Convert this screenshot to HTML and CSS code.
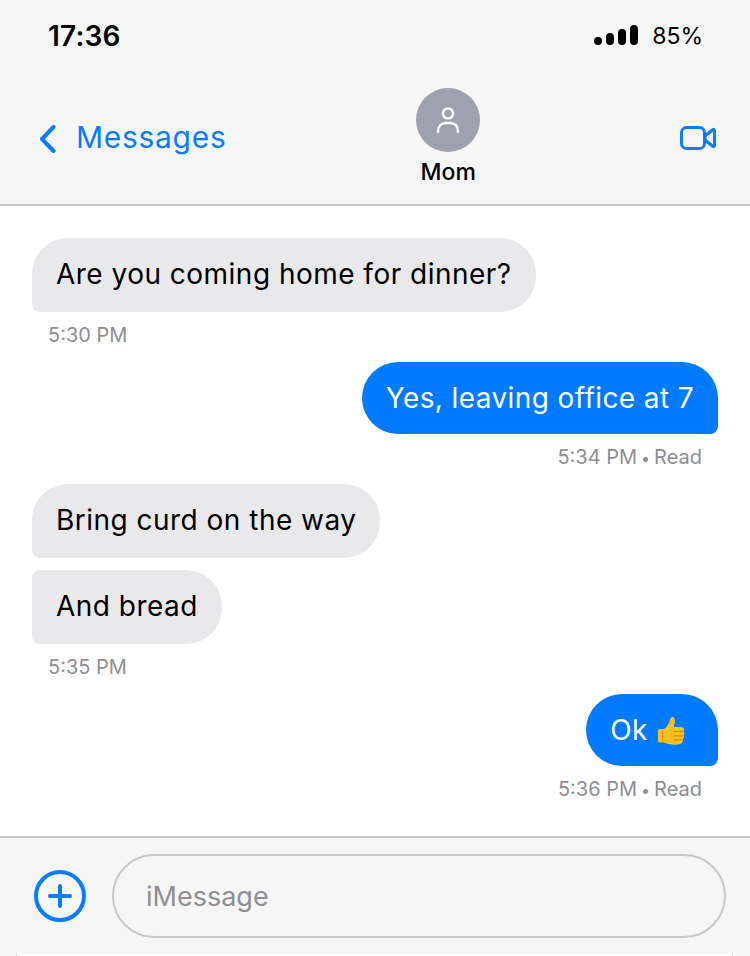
FILE: index.html
```html
<!DOCTYPE html>
<html lang="en">
<head>
    <meta charset="UTF-8">
    <meta name="viewport" content="width=device-width, initial-scale=1.0">
    <title>Messages</title>
    <link rel="stylesheet" href="styles.css">
</head>
<body>

    <div class="phone">
        <header class="top">
            <div class="status-bar">
                <span class="clock">17:36</span>
                <div class="status-right">
                    <div class="signal">
                        <span class="bar bar-1"></span>
                        <span class="bar bar-2"></span>
                        <span class="bar bar-3"></span>
                        <span class="bar bar-4"></span>
                    </div>
                    <span class="battery">85%</span>
                </div>
            </div>
            <div class="nav-bar">
                <div class="back">
                    <svg class="back-icon" width="18" height="28" viewBox="0 0 18 28"><path d="M15.5 2 L4 14 L15.5 26" fill="none" stroke="#0a7cff" stroke-width="4" stroke-linecap="round" stroke-linejoin="round"/></svg>
                    <span>Messages</span>
                </div>
                <div class="contact">
                    <div class="avatar">
                        <svg width="24" height="28" viewBox="0 0 24 28"><circle cx="12" cy="7.5" r="5" fill="none" stroke="#fff" stroke-width="2.4"/><path d="M2 26 C2 20 5 17 10 17 H14 C19 17 22 20 22 26" fill="none" stroke="#fff" stroke-width="2.4" stroke-linecap="round"/></svg>
                    </div>
                    <span class="contact-name">Mom</span>
                </div>
                <svg class="video-icon" width="36" height="24" viewBox="0 0 36 24"><rect x="1.5" y="1.5" width="23" height="21" rx="5" fill="none" stroke="#0a7cff" stroke-width="3"/><path d="M25 10 L33 3.5 C33.6 3.2 34.5 3.5 34.5 4.5 V19.5 C34.5 20.5 33.6 20.8 33 20.5 L25 14 Z" fill="none" stroke="#0a7cff" stroke-width="3" stroke-linejoin="round"/></svg>
            </div>
        </header>

        <main class="thread">
            <div class="bubble incoming first">Are you coming home for dinner?</div>
            <p class="stamp">5:30 PM</p>

            <div class="bubble outgoing">Yes, leaving office at 7</div>
            <p class="stamp stamp-right">5:34 PM<span class="dot">&bull;</span>Read</p>

            <div class="bubble incoming">Bring curd on the way</div>
            <div class="bubble incoming follow-up">And bread</div>
            <p class="stamp">5:35 PM</p>

            <div class="bubble outgoing">Ok
                <svg class="thumbs" width="28" height="30" viewBox="0 0 30 30" preserveAspectRatio="none"><path d="M1 15 C1 14 2 13 3 13 H7 C8.5 13 11.5 9.5 13 6.5 C14 4.5 14.5 1 16.5 1 C19 1 19.5 4 19 6.5 L18 11 H26 C28 11 29 12 29 13.5 C29 14.5 28.5 15 28.5 15.5 C29.5 16.5 29.5 18.5 28.5 19.5 C29 20.5 29 22.5 27.5 23.5 C28 25.5 27 27.5 25 28 C20.5 29 14 29 10 27.5 C8.5 27 7 26.5 5 26.5 H3 C2 26.5 1 26 1 25 Z" fill="#fcc21b"/><path d="M18 15.5 H28 M18 19.8 H28 M18 23.8 H27" stroke="#d98a00" stroke-width="1.3" fill="none"/><path d="M6 14 V26" stroke="#e8a012" stroke-width="1.2" fill="none"/></svg>
            </div>
            <p class="stamp stamp-right">5:36 PM<span class="dot">&bull;</span>Read</p>
        </main>

        <footer class="composer">
            <svg class="plus-icon" width="52" height="52" viewBox="0 0 52 52"><circle cx="26" cy="26" r="24" fill="none" stroke="#0a7cff" stroke-width="4"/><path d="M16 26 H36 M26 16 V36" stroke="#0a7cff" stroke-width="4" stroke-linecap="round"/></svg>
            <div class="input">iMessage</div>
        </footer>
    </div>

</body>
</html>
```

FILE: styles.css
```css
body {
    font-family: Inter, "Liberation Sans", sans-serif;
    background-color: #fff;
    margin: 0;
    padding: 0;
}
.phone {
    width: 750px;
    height: 956px;
    display: flex;
    flex-direction: column;
    overflow: hidden;
}
.top {
    background-color: #f6f6f6;
    border-bottom: 2px solid #c8c8c8;
    height: 204px;
    flex-shrink: 0;
}
.status-bar {
    display: flex;
    justify-content: space-between;
    align-items: center;
    height: 72px;
    padding: 0 48px;
}
.clock {
    font-size: 28px;
    font-weight: 600;
    letter-spacing: 0.2px;
    color: #000;
}
.status-right {
    display: flex;
    align-items: center;
    gap: 14px;
}
.signal {
    display: flex;
    align-items: flex-end;
    gap: 4px;
    margin-top: -2px;
}
.bar {
    width: 8px;
    background-color: #000;
    border-radius: 4px;
}
.bar-1 { height: 8px; }
.bar-2 { height: 12px; }
.bar-3 { height: 16px; }
.bar-4 { height: 20px; }
.battery {
    font-size: 23px;
    color: #000;
    margin-right: -1px;
}
.nav-bar {
    display: flex;
    justify-content: space-between;
    align-items: flex-start;
    padding: 16px 34px 0 38px;
}
.back {
    display: flex;
    align-items: center;
    gap: 20px;
    margin-top: 31px;
    font-size: 30px;
    letter-spacing: 0.7px;
    color: #0a7cff;
}
.back-icon {
    margin-top: 3px;
}
.contact {
    display: flex;
    flex-direction: column;
    align-items: center;
    gap: 6px;
    margin-left: -10px;
}
.avatar {
    width: 64px;
    height: 64px;
    border-radius: 50%;
    background-color: #9ca3af;
    display: flex;
    align-items: center;
    justify-content: center;
}
.contact-name {
    font-size: 23px;
    font-weight: 500;
    color: #000;
}
.video-icon {
    margin-top: 38px;
}
.thread {
    flex: 1;
    display: flex;
    flex-direction: column;
    align-items: flex-start;
    padding: 32px 32px 0;
}
.bubble {
    font-size: 28px;
    line-height: 34px;
    letter-spacing: 0.48px;
    padding: 19px 24px 21px;
    box-sizing: border-box;
}
.incoming {
    background-color: #e9e9eb;
    color: #000;
    border-radius: 36px 36px 36px 8px;
}
.outgoing {
    background-color: #007aff;
    color: #fff;
    border-radius: 36px 36px 8px 36px;
    align-self: flex-end;
    padding: 19px 24px;
    letter-spacing: 0.4px;
}
.follow-up {
    margin-top: 12px;
    border-radius: 8px 36px 36px 8px;
}
.thumbs {
    vertical-align: -6px;
    margin-left: 1px;
    margin-right: 9px;
}
.stamp {
    font-size: 20px;
    line-height: 24px;
    color: #8e8e93;
    margin: 11px 16px 15px;
}
.stamp-right {
    align-self: flex-end;
}
.dot {
    font-size: 16px;
    line-height: 1;
    margin: 0 4px;
}
.composer {
    position: relative;
    background-color: #f6f6f6;
    border-top: 2px solid #c8c8c8;
    height: 120px;
    flex-shrink: 0;
    display: flex;
    align-items: flex-start;
    gap: 26px;
    padding: 16px 24px 0 34px;
    box-sizing: border-box;
}
/* thin white edge left along the very bottom of the screen */
.composer::after {
    content: "";
    position: absolute;
    left: 16px;
    right: 17px;
    bottom: 0;
    height: 2px;
    background-color: #fff;
    border-left: 1px solid #d8d8d8;
    border-right: 1px solid #d8d8d8;
}
.plus-icon {
    margin-top: 16px;
}
.input {
    flex: 1;
    height: 84px;
    box-sizing: border-box;
    border: 2px solid #c8c8c8;
    border-radius: 42px;
    padding-left: 32px;
    display: flex;
    align-items: center;
    font-size: 27px;
    color: #8e8e93;
}
```
